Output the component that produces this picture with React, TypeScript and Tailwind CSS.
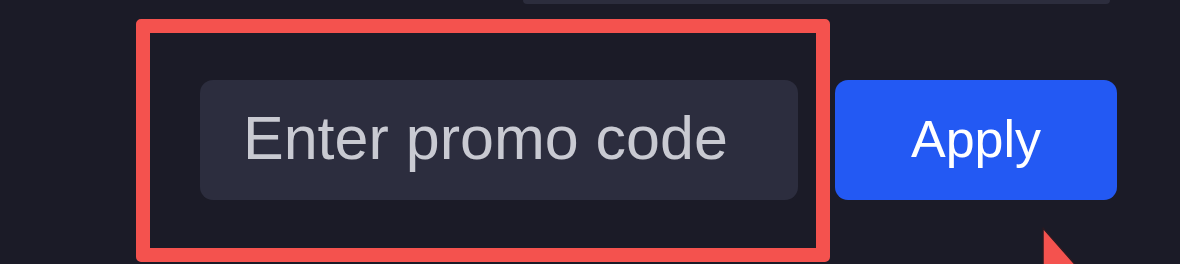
// App.tsx
function CursorArrow() {
  return (
    <svg
      className="absolute left-[1036px] top-[222px]"
      width="60"
      height="50"
      viewBox="0 0 60 50"
    >
      <polygon points="7,6 7,48 44,48" fill="#f4524e" stroke="#2a1a22" strokeWidth="1.5" strokeLinejoin="round" />
    </svg>
  );
}

function App() {
  return (
    <div className="relative h-[264px] w-[1180px] overflow-hidden bg-[#1b1b27] font-['Liberation_Sans',Arial,sans-serif]">
      {/* bottom edge of the panel above */}
      <div className="ml-[523px] h-[4px] w-[587px] rounded-b-[6px] bg-[#2c2d3d]"></div>

      <div className="mt-[15px] flex items-start">
        {/* highlighted promo field */}
        <div className="ml-[136px] h-[243px] w-[694px] rounded-[5px] border-[14px] border-[#f4524e] pl-[50px] pt-[47px]">
          <input
            type="text"
            placeholder="Enter promo code"
            className="h-[120px] w-[598px] rounded-[13px] bg-[#2c2d3e] pb-[5px] pl-[43px] text-[61px] text-[#c9cad2] outline-none placeholder:text-[#c9cad2]"
          />
        </div>

        <button className="ml-[5px] mt-[61px] flex h-[120px] w-[282px] items-center justify-center rounded-[13px] bg-[#2359f3] pb-[2px] text-[52px] text-white">
          Apply
        </button>
      </div>

      <CursorArrow />
    </div>
  );
}

export default App;
